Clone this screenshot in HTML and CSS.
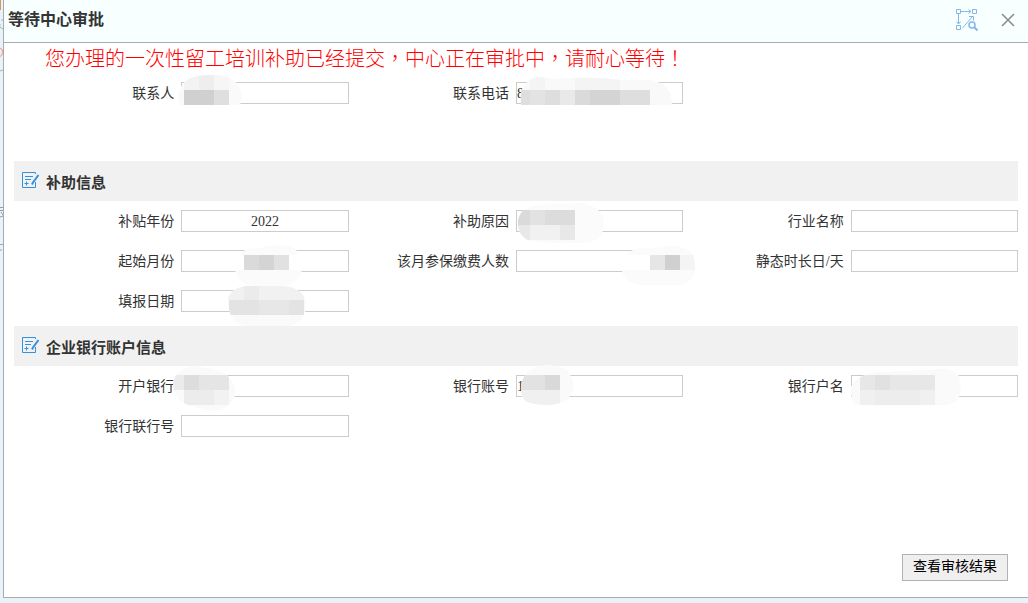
FILE: index.html
```
<!DOCTYPE html>
<html lang="zh-CN">
<head>
<meta charset="utf-8">
<title>等待中心审批</title>
<link rel="stylesheet" href="styles.css">
</head>
<body>
<svg class="backdrop" width="3" height="260" aria-hidden="true">
  <path d="M0 0h1v10h-1z" fill="#d09a62"/><path d="M1 20h2M0 25h1" stroke="#9bbbe8"/>
  <path d="M0 27l3 2M0 71l3-1" stroke="#7fd08a" fill="none"/>
  <path d="M0 48q3 1 2.500 4.500t-2.500 4" stroke="#f58a8a" fill="none"/>
  <path d="M0 207.500h3M0 210.500h3M1 212l2 3M0 217l3-1" stroke="#8f9fae" fill="none"/>
  <path d="M0 244.500h3M0 250h2" stroke="#9aaabb"/>
</svg>
<main class="dialog">
  <header class="titlebar">
    <h1 class="title">等待中心审批</h1>
    <div class="tools">
      <button class="tool" type="button" aria-label="查看流程">
        <svg width="24" height="24" viewBox="0 0 24 24" fill="none" stroke="#86b6ea">
          <path d="M1.500 1.500h4v4h-4zM17.500 1.500h4v4h-4zM1.500 17.500h4v4h-4zM6 3.500h10M13.500 1.500l2.500 2-2.500 2M3.500 6v10M1.500 13.500l2 2.500 2-2.500M7.500 20L18 8M14 8.500h4.500v4"/>
          <circle cx="17" cy="17" r="3" stroke-width="1.500"/><path d="M19 19l3.500 3.500" stroke-width="2"/>
        </svg>
      </button>
      <button class="tool" type="button" aria-label="关闭">
        <svg width="14" height="14" viewBox="0 0 14 14" fill="none" stroke="#8d8d8d" stroke-width="1.600"><path d="M1 1l12 12M13 1L1 13"/></svg>
      </button>
    </div>
  </header>
  <form class="content">
    <p class="message">您办理的一次性留工培训补助已经提交<span lang="zh-TW">，</span>中心正在审批中<span lang="zh-TW">，</span>请耐心等待<span lang="zh-TW">！</span></p>
    <div class="fields contact">
      <label for="person">联系人</label>
      <div class="field"><input id="person" type="text">
        <svg class="mask" viewBox="171 67 200 60" aria-hidden="true">
          <clipPath id="m1"><path d="M178 98Q179 84 190 78Q208 72 228 77Q241 82 242 98L240 105H180Z"/></clipPath>
          <g clip-path="url(#m1)" shape-rendering="crispEdges"><path fill="#fafafa" d="M175 72h70v33h-70z"/><path fill="#f3f3f3" d="M184 75h15v15h-15z"/><path fill="#eeeeee" d="M199 75h15v15h-15z"/><path fill="#f6f6f6" d="M214 75h15v15h-15z"/><path fill="#d0d0d0" d="M184 90h30v15h-30z"/><path fill="#dfdfdf" d="M214 90h15v15h-15z"/></g>
        </svg></div>
      <label for="phone">联系电话</label>
      <div class="field"><input id="phone" type="text" value="8">
        <svg class="mask" viewBox="505 67 200 60" aria-hidden="true">
          <clipPath id="m2"><path d="M520 105V92Q525 78 538 77L555 79Q590 76 620 80L650 80Q671 84 671 105Z"/></clipPath>
          <g clip-path="url(#m2)" shape-rendering="crispEdges"><path fill="#f9f9f9" d="M515 75h160v30h-160z"/><path fill="#f4f4f4" d="M529 75h15v15h-15zM574 75h45v15h-45z"/><path fill="#dedede" d="M520 90h9v15h-9zM544 90h15v15h-15zM619 90h30v15h-30z"/><path fill="#e3e3e3" d="M529 90h15v15h-15z"/><path fill="#e9e9e9" d="M559 90h15v15h-15z"/><path fill="#dadada" d="M574 90h15v15h-15z"/><path fill="#d4d4d4" d="M589 90h30v15h-30z"/></g>
        </svg></div>
    </div>

    <h2 class="section"><svg class="edit" width="18" height="18" viewBox="0 0 18 18" fill="none" stroke="#3292e0" aria-hidden="true"><path d="M13.500 2V.500H.500v15h13V10M3 4.500h8M3 7.500h6M4.500 9.500v4M2.500 11.500h4"/><path stroke-width="2" d="M16.500 3L11 10.500l-1 2"/></svg>补助信息</h2>
    <div class="fields">
      <label for="year">补贴年份</label>
      <div class="field"><input id="year" class="centered" type="text" value="2022"></div>
      <label for="reason">补助原因</label>
      <div class="field"><input id="reason" type="text">
        <svg class="mask" viewBox="505 195 200 60" aria-hidden="true">
          <clipPath id="m3"><path d="M517 220Q520 207 535 205L580 203Q603 207 603 224Q603 238 590 242Q560 245 529 241Q516 236 517 220Z"/></clipPath>
          <g clip-path="url(#m3)" shape-rendering="crispEdges"><path fill="#fbfbfb" d="M515 202h90v43h-90z"/><path fill="#dadada" d="M516 210h13v15h-13z"/><path fill="#e2e2e2" d="M529 210h15v15h-15z"/><path fill="#dcdcdc" d="M544 210h30v15h-30z"/><path fill="#e8e8e8" d="M516 225h13v15h-13zM559 225h15v15h-15z"/><path fill="#f1f1f1" d="M529 225h30v15h-30z"/></g>
        </svg></div>
      <label for="industry">行业名称</label>
      <div class="field"><input id="industry" type="text"></div>

      <label for="start">起始月份</label>
      <div class="field"><input id="start" type="text">
        <svg class="mask" viewBox="171 235 200 60" aria-hidden="true">
          <path fill="#fbfbfb" d="M240 255Q243 248 260 248Q286 241 296 250Q299 255 296 255ZM235 270H302Q298 285 280 286H255Q238 284 235 270Z"/>
          <path fill="#fff" d="M240 255h60v15h-60z"/>
          <g shape-rendering="crispEdges"><path fill="#dadada" d="M244 255h15v15h-15z"/><path fill="#d4d4d4" d="M259 255h15v15h-15z"/><path fill="#e1e1e1" d="M274 255h15v15h-15z"/></g>
        </svg></div>
      <label for="count">该月参保缴费人数</label>
      <div class="field"><input id="count" type="text">
        <svg class="mask" viewBox="505 235 200 60" aria-hidden="true">
          <clipPath id="m4"><path d="M626 253Q635 247 655 248Q680 243 690 252Q695 258 694 273Q690 285 675 285H640Q624 284 621 271Z"/></clipPath>
          <g clip-path="url(#m4)" shape-rendering="crispEdges"><path fill="#fbfbfb" d="M620 245h75v40h-75z"/><path fill="#fff" d="M620 255h29v15h-29z"/><path fill="#e6e6e6" d="M649 255h15v15h-15z"/><path fill="#d0d0d0" d="M664 255h15v15h-15z"/><path fill="#f4f4f4" d="M679 255h15v15h-15z"/></g>
        </svg></div>
      <label for="days">静态时长日/天</label>
      <div class="field"><input id="days" type="text"></div>

      <label for="date">填报日期</label>
      <div class="field"><input id="date" type="text">
        <svg class="mask" viewBox="171 275 200 60" aria-hidden="true">
          <clipPath id="m5"><path d="M228 300Q229 289 245 286H284Q303 288 306 302Q307 322 289 326H246Q228 323 228 300Z"/></clipPath>
          <g clip-path="url(#m5)" shape-rendering="crispEdges"><path fill="#fafafa" d="M225 282h85v46h-85z"/><path fill="#f1f1f1" d="M228 285h76v15h-76z"/><path fill="#ebebeb" d="M244 285h15v15h-15z"/><path fill="#e3e3e3" d="M229 300h75v15h-75z"/><path fill="#e7e7e7" d="M259 300h30v15h-30z"/></g>
        </svg></div>
    </div>

    <h2 class="section spaced"><svg class="edit" width="18" height="18" viewBox="0 0 18 18" fill="none" stroke="#3292e0" aria-hidden="true"><path d="M13.500 2V.500H.500v15h13V10M3 4.500h8M3 7.500h6M4.500 9.500v4M2.500 11.500h4"/><path stroke-width="2" d="M16.500 3L11 10.500l-1 2"/></svg>企业银行账户信息</h2>
    <div class="fields">
      <label for="bank">开户银行</label>
      <div class="field"><input id="bank" type="text">
        <svg class="mask" viewBox="171 360 200 60" aria-hidden="true">
          <clipPath id="m6"><path d="M173 384Q175 368 194 366Q210 368 223 372Q236 381 235 395Q230 411 210 411L188 405Q174 400 173 384Z"/></clipPath>
          <g clip-path="url(#m6)" shape-rendering="crispEdges"><path fill="#fafafa" d="M170 363h68v50h-68z"/><path fill="#ebebeb" d="M172 375h12v15h-12z"/><path fill="#dddddd" d="M184 375h15v15h-15z"/><path fill="#e5e5e5" d="M199 375h30v15h-30z"/><path fill="#ececec" d="M184 390h30v15h-30z"/><path fill="#f2f2f2" d="M214 390h15v15h-15z"/></g>
        </svg></div>
      <label for="account">银行账号</label>
      <div class="field"><input id="account" type="text" value="1">
        <svg class="mask" viewBox="505 360 200 60" aria-hidden="true">
          <clipPath id="m7"><path d="M520 386Q522 371 538 366Q553 363 566 370Q574 380 572 390Q568 402 556 404Q540 407 526 402Q519 397 520 386Z"/></clipPath>
          <g clip-path="url(#m7)" shape-rendering="crispEdges"><path fill="#fafafa" d="M518 363h57v44h-57z"/><path fill="#e2e2e2" d="M520 375h24v15h-24z"/><path fill="#d9d9d9" d="M544 375h15v15h-15z"/><path fill="#f0f0f0" d="M520 390h39v15h-39z"/></g>
        </svg></div>
      <label for="holder">银行户名</label>
      <div class="field"><input id="holder" type="text">
        <svg class="mask" viewBox="840 360 200 60" aria-hidden="true">
          <clipPath id="m8"><path d="M850 387Q854 376 875 372L930 370Q950 365 958 376Q965 401 946 405H854Q849 397 850 387Z"/></clipPath>
          <g clip-path="url(#m8)" shape-rendering="crispEdges"><path fill="#fafafa" d="M848 363h115v44h-115z"/><path fill="#e7e7e7" d="M859 375h75v15h-75z"/><path fill="#e1e1e1" d="M874 375h15v15h-15z"/><path fill="#f0f0f0" d="M859 390h75v15h-75z"/><path fill="#ededed" d="M874 390h45v15h-45z"/></g>
        </svg></div>

      <label for="branch">银行联行号</label>
      <div class="field"><input id="branch" type="text"></div>
    </div>
    <div class="actions"><button class="result" type="button">查看审核结果</button></div>
  </form>
</main>
</body>
</html>
```
FILE: styles.css
```
* { box-sizing: border-box; }

body {
  margin: 0;
  min-height: 100vh;
  display: flex;
  background: #e9f2f9;
  color: #333;
  font: 14px/20px "Liberation Serif", "Noto Sans CJK SC", sans-serif;
  overflow: hidden;
}

.backdrop { flex: none; }

.dialog {
  flex: 1;
  display: flex;
  flex-direction: column;
  margin-bottom: 5px;
  border: solid #a9abad;
  border-width: 0 0 1px 1px;
  background: #fff;
}

.titlebar {
  display: flex;
  align-items: center;
  justify-content: space-between;
  height: 43px;
  padding: 0 13px 2px 4px;
  background: #f7ffff;
  border-bottom: 1px solid #a9abad;
}

.title { margin: 0; font-size: 16px; line-height: 24px; }

.tools { display: flex; align-items: center; gap: 22px; }

.tool {
  display: flex;
  padding: 0;
  border: 0;
  background: none;
}

.content {
  flex: 1;
  display: flex;
  flex-direction: column;
  padding: 0 10px 16px;
}

.message {
  margin: 0;
  padding-left: 31px;
  color: #f00;
  font-family: "Noto Sans CJK SC", sans-serif;
  font-size: 20px;
  font-weight: 300;
  line-height: 30px;
}

.message span { font-family: "Noto Sans CJK TC", sans-serif; }

.fields {
  display: grid;
  grid-template-columns: repeat(6, minmax(0, 1fr));
  grid-auto-rows: 40px;
  align-items: center;
}

.contact { margin-bottom: 48px; }

.fields label {
  padding: 2px 7px 0 0;
  text-align: right;
  white-space: nowrap;
}

.field { position: relative; height: 22px; }

.field input {
  display: block;
  width: 100%;
  height: 22px;
  padding: 2px 0 0;
  border: 1px solid #ccc;
  background: #fff;
  color: #333;
  font: inherit;
}

.field .centered { text-align: center; }

.mask {
  position: absolute;
  left: -10px;
  top: -15px;
  width: 200px;
  height: 60px;
  pointer-events: none;
}

.section {
  display: flex;
  align-items: center;
  gap: 6px;
  height: 40px;
  margin: 0;
  padding: 4px 8px 0;
  background: #f1f1f1;
  font-size: 15px;
  line-height: 20px;
}

.spaced { margin-top: 5px; }

.edit { margin-bottom: 4px; }

.actions {
  display: flex;
  justify-content: flex-end;
  margin-top: auto;
  padding-right: 10px;
}

.result {
  height: 27px;
  padding: 0 10px 2px;
  border: 1px solid #b2b2b2;
  background: #efefef;
  color: #000;
  font: inherit;
}
```
